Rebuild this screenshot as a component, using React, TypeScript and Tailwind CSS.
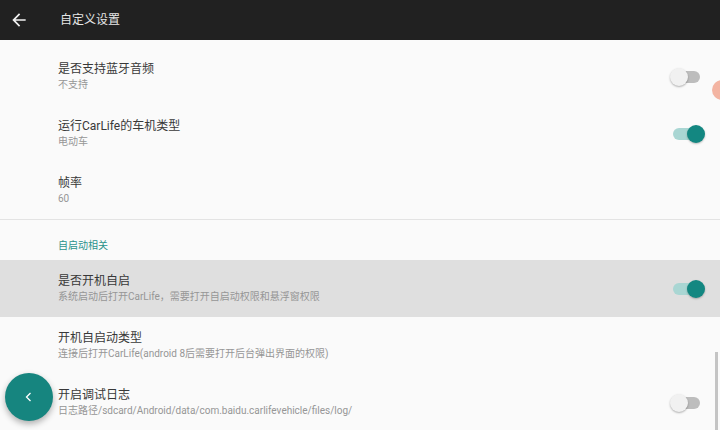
type Item = {
  title: string
  desc: string
  toggle?: boolean
  highlight?: boolean
}

const topItems: Item[] = [
  { title: "是否支持蓝牙音频", desc: "不支持", toggle: false },
  { title: "运行CarLife的车机类型", desc: "电动车", toggle: true },
  { title: "帧率", desc: "60" },
]

const bootItems: Item[] = [
  { title: "是否开机自启", desc: "系统启动后打开CarLife，需要打开自启动权限和悬浮窗权限", toggle: true, highlight: true },
  { title: "开机自启动类型", desc: "连接后打开CarLife(android 8后需要打开后台弹出界面的权限)" },
  { title: "开启调试日志", desc: "日志路径/sdcard/Android/data/com.baidu.carlifevehicle/files/log/", toggle: false },
]

function Toggle({ on }: { on: boolean }) {
  return (
    <div className="relative w-[27px] h-[12px] mr-[2px]">
      <div className={on ? "absolute inset-0 rounded-full bg-[#a9d6d3]" : "absolute inset-0 rounded-full bg-[#bdbdbd]"} />
      <div
        className={
          on
            ? "absolute top-[-3px] left-[14px] w-[18px] h-[18px] rounded-full bg-[#138781] shadow-[0_1px_2px_rgba(0,0,0,0.25)]"
            : "absolute top-[-3px] left-[-3px] w-[18px] h-[18px] rounded-full bg-[#f1f1f1] shadow-[0_1px_2px_rgba(0,0,0,0.3)]"
        }
      />
    </div>
  )
}

function Row({ item }: { item: Item }) {
  return (
    <div className={`h-[57px] flex items-center pl-[58px] pr-[18px] ${item.highlight ? "bg-[#dfdfdf]" : ""}`}>
      <div className="flex-1 flex flex-col">
        <span className="text-[12px] leading-[15px] text-[#383838]">{item.title}</span>
        <span className="text-[10px] leading-[13px] text-[#969696] mt-[1px]">{item.desc}</span>
      </div>
      {item.toggle !== undefined && <Toggle on={item.toggle} />}
    </div>
  )
}

export default function App() {
  return (
    <div className="relative w-[720px] h-[430px] overflow-hidden bg-[#fafafa] font-['Roboto','Noto_Sans_CJK_SC',sans-serif]">
      <div className="h-10 bg-[#212121] flex items-center">
        <svg width="20" height="20" viewBox="0 0 24 24" className="ml-[9px]" fill="#f0f0f0">
          <path d="M20 11H7.83l5.59-5.59L12 4l-8 8 8 8 1.41-1.41L7.83 13H20v-2z" />
        </svg>
        <span className="ml-[31px] text-[12px] text-[#e6e6e6]">自定义设置</span>
      </div>

      <div className="h-2" />
      {topItems.map((item, index) => (
        <Row key={index} item={item} />
      ))}
      <div className="h-px bg-[#e3e3e3]" />

      <div className="h-[40px] flex items-end pl-[58px] pb-[7px]">
        <span className="text-[10px] text-[#2a928c]">自启动相关</span>
      </div>
      {bootItems.map((item, index) => (
        <Row key={index} item={item} />
      ))}
      <div className="h-px bg-[#e3e3e3]" />

      {/* edge glow */}
      <div className="absolute top-[80px] left-[712px] w-[20px] h-[20px] rounded-full bg-[#f3b4a2]" />

      {/* scrollbar */}
      <div className="absolute top-[352px] left-[715px] w-[3px] h-[78px] bg-[#c4c4c4]" />

      {/* back fab */}
      <div className="absolute left-[5px] top-[373px] w-[48px] h-[48px] rounded-full bg-[#16857f] shadow-[0_3px_6px_rgba(0,0,0,0.3)] flex items-center justify-center">
        <svg width="12" height="12" viewBox="0 0 12 12" fill="none" stroke="#ffffff" strokeWidth="1.3">
          <path d="M7.5 2L3.5 6l4 4" />
        </svg>
      </div>
    </div>
  )
}
